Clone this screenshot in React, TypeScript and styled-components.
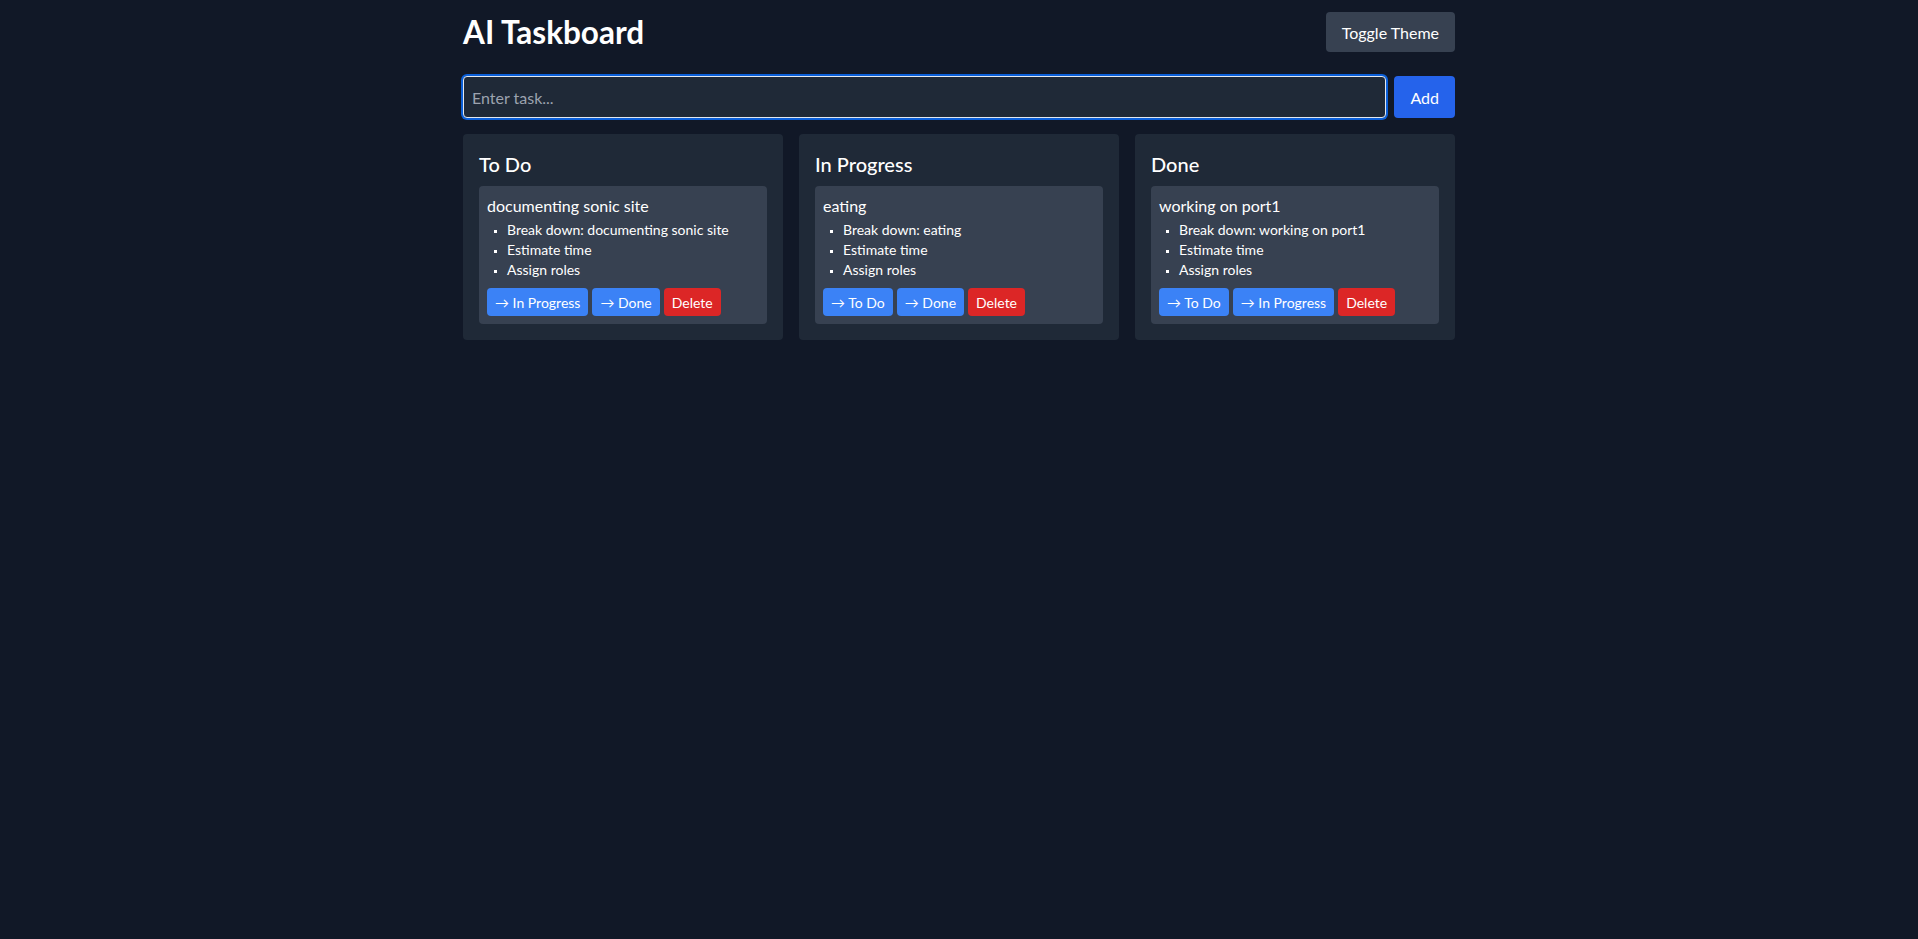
import React from 'react';
import styled, { createGlobalStyle } from 'styled-components';

type Status = 'todo' | 'progress' | 'done';

interface Task {
  id: number;
  title: string;
  status: Status;
}

const GlobalStyle = createGlobalStyle`
  html, body {
    margin: 0;
    padding: 0;
    background-color: #111827;
    color: #fff;
    font-family: Lato, "Noto Sans", sans-serif;
    min-height: 100vh;
  }
  * {
    box-sizing: border-box;
  }
`;

const Page = styled.div`
  max-width: 1024px;
  margin: 0 auto;
  padding: 12px 16px;
`;

const Header = styled.header`
  display: flex;
  justify-content: space-between;
  align-items: center;
  height: 40px;
  margin-bottom: 24px;
`;

const Title = styled.h1`
  margin: 0;
  font-size: 31.5px;
  line-height: 36px;
  font-weight: 700;
`;

const ThemeButton = styled.button`
  height: 40px;
  padding: 0 16px;
  border: none;
  border-radius: 4px;
  background-color: #374151;
  color: #fff;
  font-family: inherit;
  font-size: 16px;
  cursor: pointer;
`;

const InputRow = styled.div`
  display: flex;
  gap: 8px;
  margin-bottom: 16px;
`;

const TaskInput = styled.input`
  flex: 1;
  height: 42px;
  padding: 8px;
  border: 1px solid #e2e8f0;
  border-radius: 4px;
  background-color: #1f2937;
  color: #fff;
  font-family: inherit;
  font-size: 16px;
  box-shadow: 0 0 0 2px #0b5fd8;
  outline: none;

  &::placeholder {
    color: #9ca3af;
  }
`;

const AddButton = styled.button`
  height: 42px;
  padding: 0 16px;
  border: none;
  border-radius: 4px;
  background-color: #2563eb;
  color: #fff;
  font-family: inherit;
  font-size: 16px;
  cursor: pointer;
`;

const Board = styled.div`
  display: grid;
  grid-template-columns: repeat(3, 1fr);
  gap: 16px;
  align-items: start;
`;

const Column = styled.section`
  background-color: #1f2937;
  border-radius: 4px;
  padding: 16px;
`;

const ColumnTitle = styled.h2`
  margin: 0 0 8px;
  font-size: 20px;
  line-height: 28px;
  font-weight: 500;
`;

const Card = styled.div`
  background-color: #374151;
  border-radius: 4px;
  padding: 8px;
`;

const CardTitle = styled.div`
  font-size: 16px;
  line-height: 24px;
`;

const Steps = styled.ul`
  margin: 2px 0 0;
  padding-left: 20px;
  font-size: 14px;
  line-height: 20px;
  list-style: square outside;
`;

const Step = styled.li`
  height: 20px;

  &::marker {
    font-size: 9px;
  }
`;

const Actions = styled.div`
  display: flex;
  gap: 4px;
  margin-top: 8px;
`;

const ActionButton = styled.button<{ $danger?: boolean }>`
  height: 28px;
  padding: 0 8px;
  border: none;
  border-radius: 4px;
  background-color: ${(props) => (props.$danger ? '#dc2626' : '#3b82f6')};
  color: #fff;
  font-family: inherit;
  font-size: 14px;
  cursor: pointer;
`;

const columns: { key: Status; label: string }[] = [
  { key: 'todo', label: 'To Do' },
  { key: 'progress', label: 'In Progress' },
  { key: 'done', label: 'Done' },
];

const initialTasks: Task[] = [
  { id: 1, title: 'documenting sonic site', status: 'todo' },
  { id: 2, title: 'eating', status: 'progress' },
  { id: 3, title: 'working on port1', status: 'done' },
];

const App: React.FC = () => {
  const [tasks, setTasks] = React.useState<Task[]>(initialTasks);
  const [text, setText] = React.useState('');

  const addTask = () => {
    if (!text.trim()) return;
    setTasks([...tasks, { id: Date.now(), title: text.trim(), status: 'todo' }]);
    setText('');
  };

  const moveTask = (id: number, status: Status) => {
    setTasks(tasks.map((t) => (t.id === id ? { ...t, status } : t)));
  };

  const deleteTask = (id: number) => {
    setTasks(tasks.filter((t) => t.id !== id));
  };

  return (
    <>
      <GlobalStyle />
      <Page>
        <Header>
          <Title>AI Taskboard</Title>
          <ThemeButton>Toggle Theme</ThemeButton>
        </Header>
        <InputRow>
          <TaskInput
            placeholder="Enter task..."
            value={text}
            onChange={(e) => setText(e.target.value)}
          />
          <AddButton onClick={addTask}>Add</AddButton>
        </InputRow>
        <Board>
          {columns.map((col) => (
            <Column key={col.key}>
              <ColumnTitle>{col.label}</ColumnTitle>
              {tasks
                .filter((t) => t.status === col.key)
                .map((task) => (
                  <Card key={task.id}>
                    <CardTitle>{task.title}</CardTitle>
                    <Steps>
                      <Step>Break down: {task.title}</Step>
                      <Step>Estimate time</Step>
                      <Step>Assign roles</Step>
                    </Steps>
                    <Actions>
                      {columns
                        .filter((c) => c.key !== col.key)
                        .map((c) => (
                          <ActionButton key={c.key} onClick={() => moveTask(task.id, c.key)}>
                            → {c.label}
                          </ActionButton>
                        ))}
                      <ActionButton $danger onClick={() => deleteTask(task.id)}>
                        Delete
                      </ActionButton>
                    </Actions>
                  </Card>
                ))}
            </Column>
          ))}
        </Board>
      </Page>
    </>
  );
};

export default App;
